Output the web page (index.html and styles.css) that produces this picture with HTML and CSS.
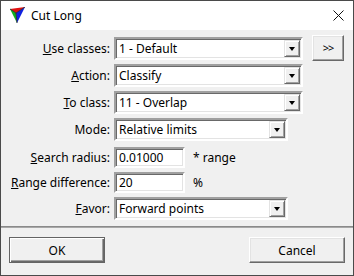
FILE: index.html
```html
<!DOCTYPE html>
<html lang="en">
  <head>
    <meta charset="UTF-8" />
    <title>Cut Long</title>
    <link rel="stylesheet" href="styles.css">
  </head>
  <body>
    <div class="window">
      <div class="titlebar">
        <svg class="app-icon" width="17" height="17" viewBox="0 0 17 17">
          <polygon points="1,2 16,0 7,6" fill="#e01010" />
          <polygon points="1,2 7,6 8,16" fill="#10b020" />
          <polygon points="16,0 7,6 8,16" fill="#1020e0" />
          <polyline points="1,2 7,6 16,0" fill="none" stroke="#202020" stroke-width="0.8" />
          <line x1="7" y1="6" x2="8" y2="16" stroke="#202020" stroke-width="0.8" />
        </svg>
        <span class="title">Cut Long</span>
        <svg class="close" width="11" height="11" viewBox="0 0 11 11">
          <path d="M0.5 0.5 L10.5 10.5 M10.5 0.5 L0.5 10.5" stroke="#111" stroke-width="1" fill="none" />
        </svg>
      </div>

      <div class="content">
        <div class="form">
          <div class="row">
            <span class="lbl"><u>U</u>se classes:</span>
            <div class="combo wide"><span class="val">1 - Default</span><span class="drop"><i></i></span></div>
            <button class="btn more">&gt;&gt;</button>
          </div>
          <div class="row">
            <span class="lbl"><u>A</u>ction:</span>
            <div class="combo wide"><span class="val">Classify</span><span class="drop"><i></i></span></div>
          </div>
          <div class="row">
            <span class="lbl"><u>T</u>o class:</span>
            <div class="combo wide"><span class="val">11 - Overlap</span><span class="drop"><i></i></span></div>
          </div>
          <div class="row">
            <span class="lbl">Mode:</span>
            <div class="combo mid"><span class="val">Relative limits</span><span class="drop"><i></i></span></div>
          </div>
          <div class="row gap6">
            <span class="lbl"><u>S</u>earch radius:</span>
            <div class="edit">0.01000</div>
            <span class="unit">* range</span>
          </div>
          <div class="row">
            <span class="lbl"><u>R</u>ange difference:</span>
            <div class="edit">20</div>
            <span class="unit">%</span>
          </div>
          <div class="row">
            <span class="lbl"><u>F</u>avor:</span>
            <div class="combo mid"><span class="val">Forward points</span><span class="drop"><i></i></span></div>
          </div>
        </div>

        <div class="sep"></div>

        <div class="buttons">
          <button class="btn default">OK</button>
          <button class="btn">Cancel</button>
        </div>
      </div>
    </div>
  </body>
</html>
```

FILE: styles.css
```css
* {
  box-sizing: border-box;
}

body {
  margin: 0;
  font-family: "Noto Sans", "Open Sans", sans-serif;
  font-size: 12px;
  color: #000;
  background: #f0f0f0;
}

.window {
  width: 354px;
  height: 276px;
  border: 1px solid #4a4a4a;
  background: #f0f0f0;
  display: flex;
  flex-direction: column;
}

.titlebar {
  height: 29px;
  background: #fff;
  display: flex;
  align-items: center;
  padding-left: 8px;
}

.app-icon {
  margin-top: -1px;
}

.title {
  margin-left: 5px;
  font-size: 12px;
}

.close {
  margin-left: auto;
  margin-right: 9px;
}

.content {
  flex: 1;
  display: flex;
  flex-direction: column;
}

.form {
  padding-top: 7px;
  display: flex;
  flex-direction: column;
  gap: 4px;
}

.row {
  display: flex;
  align-items: center;
}

.row.gap6 {
  margin-top: 2px;
}

.lbl {
  width: 109px;
  margin-right: 4px;
  text-align: right;
  white-space: nowrap;
}

.combo,
.edit {
  height: 23px;
  background: #fff;
  border: 2px solid;
  border-color: #a0a0a0 #fff #fff #a0a0a0;
  box-shadow: inset 1px 1px 0 #696969, inset -1px -1px 0 #e3e3e3;
  display: flex;
  align-items: center;
}

.combo.wide {
  width: 189px;
}

.combo.mid {
  width: 174px;
}

.val {
  flex: 1;
  padding-left: 3px;
  white-space: nowrap;
}

.drop {
  width: 16px;
  height: 17px;
  margin-right: 1px;
  background: #f0f0f0;
  border: 1px solid;
  border-color: #e3e3e3 #696969 #696969 #e3e3e3;
  box-shadow: inset 1px 1px 0 #fff, inset -1px -1px 0 #a0a0a0;
  display: flex;
  align-items: center;
  justify-content: center;
}

.drop i {
  width: 0;
  height: 0;
  border-left: 3px solid transparent;
  border-right: 3px solid transparent;
  border-top: 4px solid #000;
  margin-top: 1px;
}

.edit {
  width: 71px;
  height: 21px;
  padding-left: 3px;
}

.unit {
  margin-left: 8px;
}

.btn {
  font-family: "Noto Sans", "Open Sans", sans-serif;
  font-size: 12px;
  color: #000;
  width: 96px;
  height: 26px;
  padding: 0;
  background: #f0f0f0;
  border: 1px solid;
  border-color: #fff #696969 #696969 #fff;
  box-shadow: inset -1px -1px 0 #a0a0a0, inset 1px 1px 0 #e3e3e3;
}

.btn.more {
  width: 32px;
  margin: -3px 0 -1px 9px;
  letter-spacing: -1px;
  font-size: 11px;
}

.btn.default {
  border: 1px solid #646464;
  box-shadow: inset 1px 1px 0 #fff, inset -1px -1px 0 #696969, inset -2px -2px 0 #a0a0a0;
}

.sep {
  margin-top: 6px;
  height: 2px;
  border-top: 1px solid #8a8a8a;
  border-bottom: 1px solid #a8a8a8;
}

.buttons {
  display: flex;
  justify-content: space-between;
  padding: 9px 8px 0;
}
```
